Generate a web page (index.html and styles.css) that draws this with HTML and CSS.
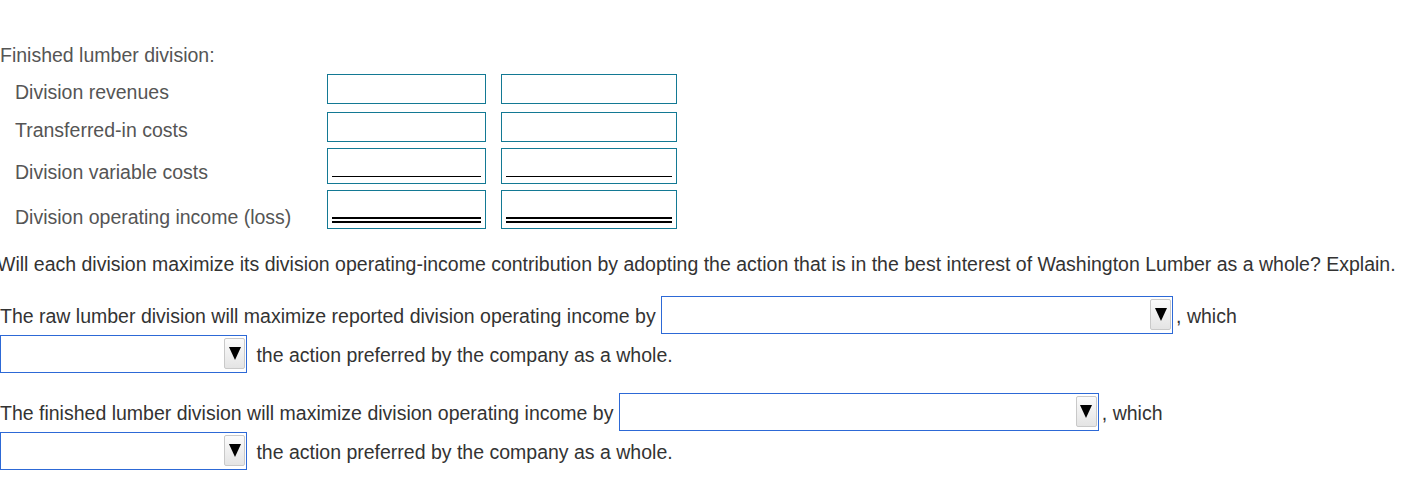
FILE: index.html
```html
<!DOCTYPE html>
<html lang="en">
<head>
<meta charset="utf-8">
<title>Finished lumber division</title>
<link rel="stylesheet" href="styles.css">
</head>
<body>
<div class="page">
  <div class="section-title">Finished lumber division:</div>
  <div class="table">
    <div class="row row-a">
      <span class="label">Division revenues</span>
      <span class="cell cell-1"></span>
      <span class="cell cell-2"></span>
    </div>
    <div class="row row-b">
      <span class="label">Transferred-in costs</span>
      <span class="cell cell-1"></span>
      <span class="cell cell-2"></span>
    </div>
    <div class="row row-c">
      <span class="label">Division variable costs</span>
      <span class="cell cell-1"><span class="rule-single"></span></span>
      <span class="cell cell-2"><span class="rule-single"></span></span>
    </div>
    <div class="row row-d">
      <span class="label">Division operating income (loss)</span>
      <span class="cell cell-1"><span class="rule-double"></span></span>
      <span class="cell cell-2"><span class="rule-double"></span></span>
    </div>
  </div>
  <p class="question">Will each division maximize its division operating-income contribution by adopting the action that is in the best interest of Washington Lumber as a whole? Explain.</p>
  <p class="answer">The raw lumber division will maximize reported division operating income by <span class="select select-512"><span class="select-inner"><span class="select-btn"><svg width="12" height="13" viewBox="0 0 12 13"><polygon points="0,0 12,0 6,13" fill="#000"/></svg></span></span></span>, which <span class="select select-247"><span class="select-inner"><span class="select-btn"><svg width="12" height="13" viewBox="0 0 12 13"><polygon points="0,0 12,0 6,13" fill="#000"/></svg></span></span></span> the action preferred by the company as a whole.</p>
  <p class="answer">The finished lumber division will maximize division operating income by <span class="select select-480"><span class="select-inner"><span class="select-btn"><svg width="12" height="13" viewBox="0 0 12 13"><polygon points="0,0 12,0 6,13" fill="#000"/></svg></span></span></span>, which <span class="select select-247"><span class="select-inner"><span class="select-btn"><svg width="12" height="13" viewBox="0 0 12 13"><polygon points="0,0 12,0 6,13" fill="#000"/></svg></span></span></span> the action preferred by the company as a whole.</p>
</div>
</body>
</html>
```

FILE: styles.css
```css
html, body {
  margin: 0;
  padding: 0;
  background: #fff;
}

.page {
  font-family: "Liberation Sans", Arial, sans-serif;
  font-size: 19.5px;
  line-height: 22px;
  color: #333;
  padding-top: 44px;
}

.section-title {
  color: #555;
}

.table {
  margin-top: 8px;
  display: flex;
  flex-direction: column;
}

.row {
  display: flex;
  align-items: flex-end;
}

.row-b { margin-top: 8px; }
.row-c { margin-top: 6px; }
.row-d { margin-top: 6px; }

.row-a .cell, .row-b .cell { height: 30px; }
.row-c .cell { height: 36px; }
.row-d .cell { height: 39px; }

.label {
  width: 312px;
  padding-left: 15px;
  padding-bottom: 1px;
  color: #555;
  white-space: nowrap;
}

.cell {
  box-sizing: border-box;
  border: 1px solid #137994;
  background: #fff;
  display: flex;
  flex-direction: column;
  justify-content: flex-end;
  padding: 0 4px 0 4px;
}

.cell-1 { width: 159px; }
.cell-2 { width: 176px; margin-left: 15px; }

.rule-single {
  display: block;
  border-top: 1px solid #000;
  margin-bottom: 6px;
}

.rule-double {
  display: block;
  height: 2px;
  border-top: 2px solid #000;
  border-bottom: 2px solid #000;
  margin-bottom: 5px;
}

.question {
  margin: 24px 0 0 -3px;
}

.answer {
  margin: 21px 0 0 0;
  line-height: 38px;
}

.answer + .answer {
  margin-top: 19px;
}

.select {
  display: inline-block;
  box-sizing: border-box;
  height: 38px;
  border: 1px solid #2d69d6;
  background: #fff;
  vertical-align: -11px;
  overflow: hidden;
  line-height: normal;
}

.select-inner {
  display: flex;
  justify-content: flex-end;
  align-items: flex-start;
  padding: 2px 1px 0 0;
}

.select-512 { width: 512px; margin-right: 3px; }
.select-480 { width: 480px; margin-right: 3px; }
.select-247 { width: 247px; margin-right: 4px; }

.select-btn {
  box-sizing: border-box;
  width: 21px;
  height: 31px;
  border: 1px solid #c9c9c9;
  border-radius: 2px;
  background: linear-gradient(#fbfbfb, #e4e4e4);
  display: flex;
  align-items: center;
  justify-content: center;
}

.select-btn svg {
  display: block;
}
```
